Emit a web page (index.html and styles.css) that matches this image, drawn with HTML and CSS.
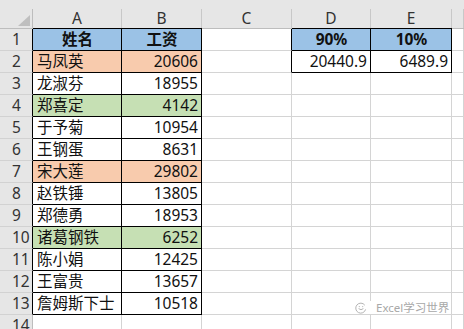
FILE: index.html
```html
<!DOCTYPE html>
<html lang="zh">
<head>
<meta charset="utf-8">
<title>Sheet</title>
<link rel="stylesheet" href="styles.css">
</head>
<body>
<div class="sheet">
  <div class="cell ch corner"><span><i class="tri"></i></span></div>
  <div class="cell ch bl-b"><span>A</span></div>
  <div class="cell ch bl-b"><span>B</span></div>
  <div class="cell ch"><span>C</span></div>
  <div class="cell ch bl-b"><span>D</span></div>
  <div class="cell ch bl-b"><span>E</span></div>
  <div class="cell ch"><span></span></div>

  <div class="cell rh bl-r">1</div>
  <div class="cell blue ctr bl-r bl-b">姓名</div>
  <div class="cell blue ctr bl-r bl-b">工资</div>
  <div class="cell bl-r"></div>
  <div class="cell blue ctr bl-r bl-b">90%</div>
  <div class="cell blue ctr bl-r bl-b">10%</div>
  <div class="cell"></div>

  <div class="cell rh bl-r">2</div>
  <div class="cell orange bl-r bl-b">马凤英</div>
  <div class="cell orange num bl-r bl-b">20606</div>
  <div class="cell bl-r"></div>
  <div class="cell num bl-r bl-b">20440.9</div>
  <div class="cell num bl-r bl-b">6489.9</div>
  <div class="cell"></div>

  <div class="cell rh bl-r">3</div>
  <div class="cell bl-r bl-b">龙淑芬</div>
  <div class="cell num bl-r bl-b">18955</div>
  <div class="cell"></div><div class="cell"></div><div class="cell"></div><div class="cell"></div>

  <div class="cell rh bl-r">4</div>
  <div class="cell green bl-r bl-b">郑喜定</div>
  <div class="cell green num bl-r bl-b">4142</div>
  <div class="cell"></div><div class="cell"></div><div class="cell"></div><div class="cell"></div>

  <div class="cell rh bl-r">5</div>
  <div class="cell bl-r bl-b">于予菊</div>
  <div class="cell num bl-r bl-b">10954</div>
  <div class="cell"></div><div class="cell"></div><div class="cell"></div><div class="cell"></div>

  <div class="cell rh bl-r">6</div>
  <div class="cell bl-r bl-b">王钢蛋</div>
  <div class="cell num bl-r bl-b">8631</div>
  <div class="cell"></div><div class="cell"></div><div class="cell"></div><div class="cell"></div>

  <div class="cell rh bl-r">7</div>
  <div class="cell orange bl-r bl-b">宋大莲</div>
  <div class="cell orange num bl-r bl-b">29802</div>
  <div class="cell"></div><div class="cell"></div><div class="cell"></div><div class="cell"></div>

  <div class="cell rh bl-r">8</div>
  <div class="cell bl-r bl-b">赵铁锤</div>
  <div class="cell num bl-r bl-b">13805</div>
  <div class="cell"></div><div class="cell"></div><div class="cell"></div><div class="cell"></div>

  <div class="cell rh bl-r">9</div>
  <div class="cell bl-r bl-b">郑德勇</div>
  <div class="cell num bl-r bl-b">18953</div>
  <div class="cell"></div><div class="cell"></div><div class="cell"></div><div class="cell"></div>

  <div class="cell rh bl-r">10</div>
  <div class="cell green bl-r bl-b">诸葛钢铁</div>
  <div class="cell green num bl-r bl-b">6252</div>
  <div class="cell"></div><div class="cell"></div><div class="cell"></div><div class="cell"></div>

  <div class="cell rh bl-r">11</div>
  <div class="cell bl-r bl-b">陈小娟</div>
  <div class="cell num bl-r bl-b">12425</div>
  <div class="cell"></div><div class="cell"></div><div class="cell"></div><div class="cell"></div>

  <div class="cell rh bl-r">12</div>
  <div class="cell bl-r bl-b">王富贵</div>
  <div class="cell num bl-r bl-b">13657</div>
  <div class="cell"></div><div class="cell"></div><div class="cell"></div><div class="cell"></div>

  <div class="cell rh bl-r">13</div>
  <div class="cell bl-r bl-b">詹姆斯下士</div>
  <div class="cell num bl-r bl-b">10518</div>
  <div class="cell"></div><div class="cell"></div><div class="cell"></div><div class="cell"></div>

  <div class="cell rh">14</div>
  <div class="cell"></div><div class="cell"></div><div class="cell"></div><div class="cell"></div><div class="cell"></div><div class="cell"></div>
</div>

<div class="wm">
  <svg width="12" height="12" viewBox="0 0 12 12" fill="none" stroke="#b4b4b4" stroke-width="1">
    <path d="M9.8 3.2 A5 5 0 1 0 10.6 7.4"/>
    <path d="M3.6 6.6 Q6 8.8 8.4 6.6"/>
    <circle cx="4.3" cy="4.6" r="0.6" fill="#b4b4b4" stroke="none"/>
    <circle cx="7.7" cy="4.6" r="0.6" fill="#b4b4b4" stroke="none"/>
  </svg>
  <span>Excel学习世界</span>
</div>
</body>
</html>
```
FILE: styles.css
```css
* { box-sizing: border-box; margin: 0; padding: 0; }
html, body { width: 464px; height: 329px; overflow: hidden; background: #fff; }
body {
  font-family: "Noto Sans", "Noto Sans CJK SC", sans-serif;
  font-size: 15.5px;
  color: #111;
  position: relative;
}
.sheet {
  display: grid;
  grid-template-columns: 33px 89px 80px 90px 79px 81px 1fr;
  grid-template-rows: 29px repeat(14, 22px);
}
.cell {
  border-right: 1px solid #d4d4d4;
  border-bottom: 1px solid #d4d4d4;
  padding: 0 3px 0 4px;
  line-height: 21px;
  white-space: nowrap;
  overflow: hidden;
}
.num { text-align: right; padding-right: 3px; }
.ctr { text-align: center; font-weight: bold; }
.blue { background: #9bc2e6; }
.orange { background: #f8cbad; }
.green { background: #c6e0b4; }

.rh {
  background: #e6e6e6;
  color: #333;
  border-right-color: #bdbdbd;
  border-bottom-color: #d2d2d2;
  padding-left: 12px;
}
.ch {
  background: #e6e6e6;
  border-right: none;
  border-bottom-color: #bdbdbd;
  display: flex;
  align-items: flex-end;
  padding: 0;
}
.ch span {
  flex: 1;
  height: 19px;
  border-right: 1px solid #c8c8c8;
  text-align: center;
  line-height: 18px;
  color: #333;
}
.corner span {
  display: flex;
  justify-content: flex-end;
  align-items: flex-end;
  padding: 0 2px 2px 0;
  border-right-color: #bdbdbd;
}
.tri {
  display: block;
  width: 0;
  height: 0;
  border-left: 12px solid transparent;
  border-bottom: 11px solid #bfbfbf;
}

.bl-r { border-right-color: #000; }
.bl-b { border-bottom-color: #000; }

.wm {
  position: absolute;
  left: 352px;
  top: 301px;
  height: 13px;
  display: flex;
  align-items: center;
  gap: 9px;
  padding: 0 2px 0 3px;
  background: #fff;
  color: #a8a8a8;
  font-size: 11.5px;
  line-height: 13px;
  white-space: nowrap;
}
```
